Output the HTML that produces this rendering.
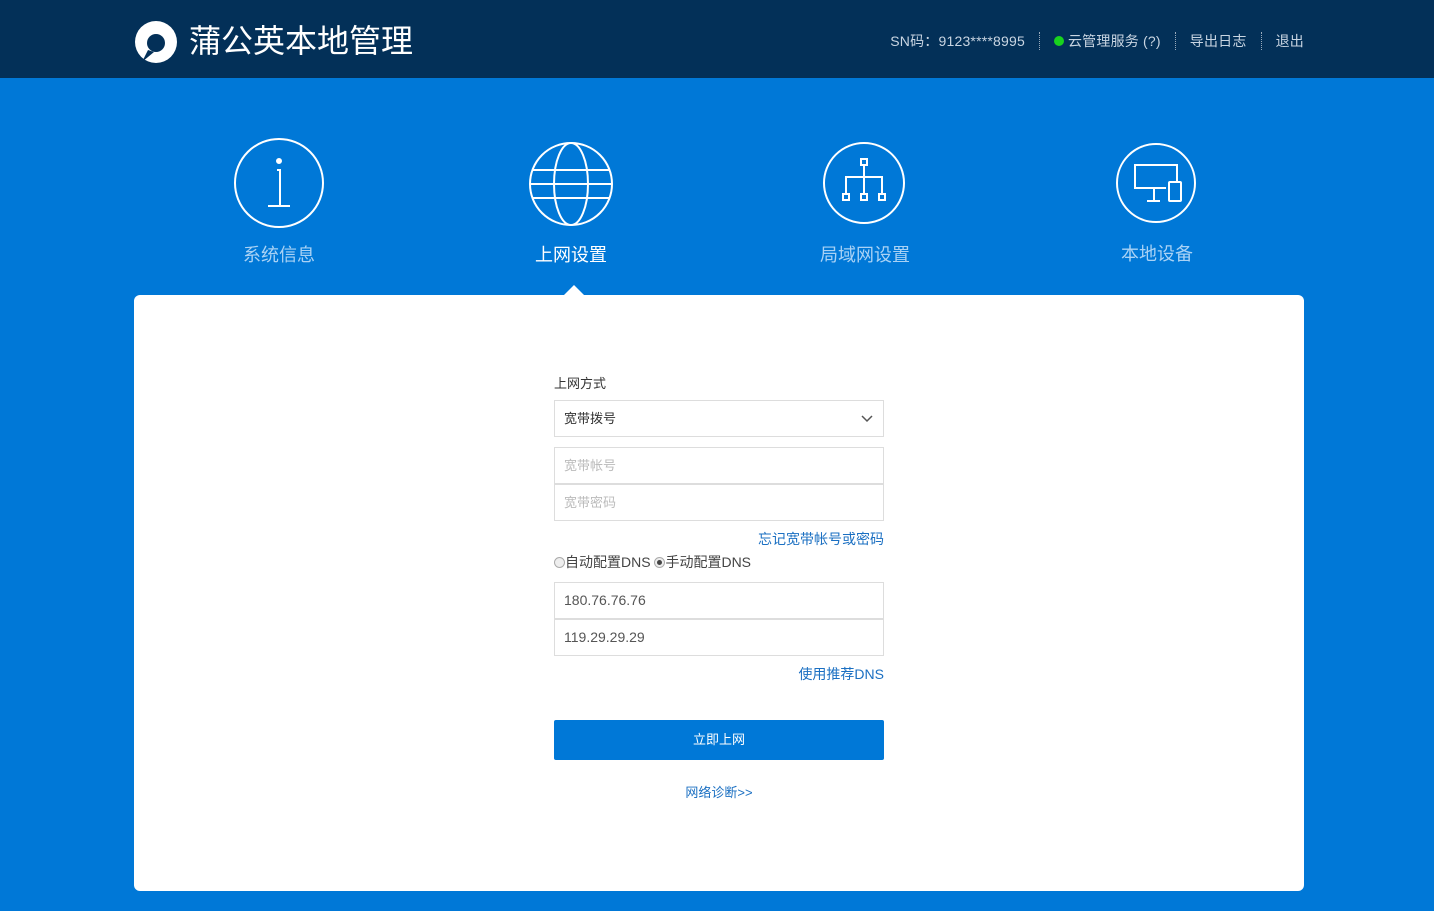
<!DOCTYPE html>
<html><head><meta charset="utf-8"><style>
*{margin:0;padding:0;box-sizing:border-box}
body{width:1434px;height:911px;background:#0078d7;font-family:"Liberation Sans","Noto Sans CJK SC",sans-serif;position:relative;overflow:hidden}
.hd{position:absolute;left:0;top:0;width:1434px;height:78px;background:#033058}
.logo{position:absolute;left:134px;top:20px}
.title{position:absolute;left:189px;top:21px;font-size:32px;color:#fff;line-height:40px}
.nav{position:absolute;right:130px;top:32px;font-size:14px;color:#c9d5e2;line-height:18px;display:flex;align-items:center;letter-spacing:0.2px}
.sep{display:inline-block;height:18px;border-left:1px dotted #9ab;margin:0 14px}
.dot{display:inline-block;width:10px;height:10px;border-radius:50%;background:#19d21e;margin-right:4px}
.ic{position:absolute;text-align:center;width:200px;font-size:18px;color:#a9d2f5}
.ic svg{display:block;margin:0 auto}
.card{position:absolute;left:134px;top:295px;width:1170px;height:596px;background:#fff;border-radius:6px}
.tri{position:absolute;left:564px;top:285px;width:0;height:0;border-left:10px solid transparent;border-right:10px solid transparent;border-bottom:10px solid #fff}
.f{position:absolute;left:554px;width:330px;font-size:13px}
.box{border:1px solid #ddd;height:37px;line-height:35px;padding-left:9px;color:#333}
.ph{color:#bbb}
.lnk{color:#1a6fc2;text-align:right}
.btn{background:#0078d7;color:#fff;text-align:center;height:40px;line-height:40px;border-radius:2px}
.r{display:inline-block;width:11px;height:11px;border:1px solid #aaa;border-radius:50%;vertical-align:-1px;background:#eee;position:relative}
</style></head><body>
<div class="hd">
<svg class="logo" width="44" height="44" viewBox="0 0 44 44"><circle cx="22" cy="22" r="21" fill="#fff"/><circle cx="22" cy="23" r="9" fill="#033058"/><path d="M8 42 L14 30 L20 32 Z" fill="#033058"/></svg>
<div class="title">蒲公英本地管理</div>
<div class="nav"><span>SN码：9123****8995</span><span class="sep"></span><span class="dot"></span><span>云管理服务 (?)</span><span class="sep"></span><span>导出日志</span><span class="sep"></span><span>退出</span></div>
</div>
<div class="ic" style="left:179px;top:137px"><svg width="92" height="92" viewBox="0 0 92 92" fill="none" stroke="#fff" stroke-width="2"><circle cx="46" cy="46" r="44"/><circle cx="46" cy="24" r="2" fill="#fff"/><path d="M44 33h3v36M35 69h22"/></svg><div style="margin-top:12px">系统信息</div></div>
<div class="ic" style="left:471px;top:142px;color:#fff"><svg width="84" height="84" viewBox="0 0 84 84" fill="none" stroke="#fff" stroke-width="2"><circle cx="42" cy="42" r="41"/><ellipse cx="42" cy="42" rx="17" ry="41"/><path d="M3 28h78M3 56h78M1 42h82"/></svg><div style="margin-top:15px">上网设置</div></div>
<div class="ic" style="left:765px;top:142px"><svg width="84" height="84" viewBox="0 0 84 84" fill="none" stroke="#fff" stroke-width="2"><circle cx="41" cy="41" r="40"/><rect x="38" y="17" width="6" height="6"/><path d="M41 23v29M23 52V35h36v17"/><rect x="20" y="52" width="6" height="6"/><rect x="38" y="52" width="6" height="6"/><rect x="56" y="52" width="6" height="6"/></svg><div style="margin-top:15px">局域网设置</div></div>
<div class="ic" style="left:1057px;top:143px"><svg width="82" height="82" viewBox="0 0 82 82" fill="none" stroke="#fff" stroke-width="2"><circle cx="40" cy="40" r="39"/><path d="M50 45H19V22h42v16M38 45v13M31 58h13"/><rect x="53" y="39" width="12" height="19" rx="1"/></svg><div style="margin-top:15px">本地设备</div></div>
<div class="card"></div><div class="tri"></div>
<div class="f" style="top:373px;color:#333">上网方式</div>
<div class="f box" style="top:400px;height:37px">宽带拨号<svg style="position:absolute;right:10px;top:14px" width="12" height="8" viewBox="0 0 12 8" fill="none" stroke="#555" stroke-width="1.5"><path d="M1 1l5 5 5-5"/></svg></div>
<div class="f box ph" style="top:447px">宽带帐号</div>
<div class="f box ph" style="top:484px">宽带密码</div>
<div class="f lnk" style="top:529px;font-size:14px">忘记宽带帐号或密码</div>
<div class="f" style="top:552px;color:#444;font-size:14px"><span class="r"></span>自动配置DNS <span class="r"><span style="position:absolute;left:2px;top:2px;width:5px;height:5px;border-radius:50%;background:#444"></span></span>手动配置DNS</div>
<div class="f box" style="top:582px;color:#555;font-size:14px">180.76.76.76</div>
<div class="f box" style="top:619px;color:#555;font-size:14px">119.29.29.29</div>
<div class="f lnk" style="top:664px;font-size:14px">使用推荐DNS</div>
<div class="f btn" style="top:720px">立即上网</div>
<div class="f" style="top:782px;text-align:center;color:#1a6fc2">网络诊断&gt;&gt;</div>
</body></html>
